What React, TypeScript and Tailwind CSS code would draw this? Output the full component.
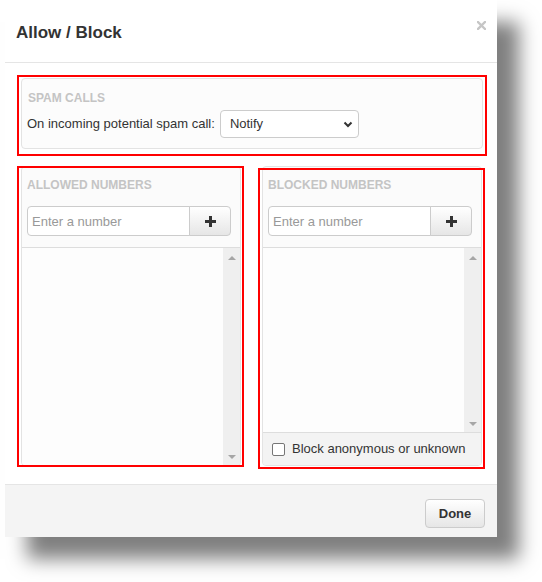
import { ReactNode } from "react";

function ScrollArrow({ dir }: { dir: "up" | "down" }) {
  return (
    <svg width="8" height="4" viewBox="0 0 8 4">
      <polygon points={dir === "up" ? "0,4 8,4 4,0" : "0,0 8,0 4,4"} fill="#a6a6a6" />
    </svg>
  );
}

function PlusIcon() {
  return (
    <svg width="11" height="11" viewBox="0 0 11 11">
      <rect x="4" y="0" width="3" height="11" fill="#333" />
      <rect x="0" y="4" width="11" height="3" fill="#333" />
    </svg>
  );
}

function NumberList({ title, children }: { title: string; children?: ReactNode }) {
  return (
    <div className="h-[300px] flex flex-col rounded-[4px] border border-[#e3e3e3] bg-[#fbfbfb] overflow-hidden">
      <div className="pl-[5px] pt-[11px] text-[12px] leading-[14px] font-bold text-[#c4c4c4]">{title}</div>
      <div className="mt-[14px] ml-[5px] flex h-[30px] w-[204px]">
        <input
          placeholder="Enter a number"
          className="w-[163px] h-full rounded-l-[4px] border border-[#cccccc] bg-white px-[4px] text-[13px] text-[#333] placeholder:text-[#999] outline-none"
        />
        <button className="-ml-px w-[42px] h-full rounded-r-[4px] border border-[#cccccc] bg-gradient-to-b from-white to-[#e6e6e6] flex items-center justify-center">
          <PlusIcon />
        </button>
      </div>
      <div className="mt-[11px] flex flex-1 border-t border-[#dddddd]">
        <div className="flex-1 bg-[#fdfdfd]" />
        <div className="w-[17px] bg-[#efefef] flex flex-col items-center justify-between pt-[8px] pb-[6px]">
          <ScrollArrow dir="up" />
          <ScrollArrow dir="down" />
        </div>
      </div>
      {children}
    </div>
  );
}

export default function App() {
  return (
    <div className="w-[542px] h-[582px] bg-white overflow-hidden font-['Liberation_Sans',Arial,sans-serif] text-[#333]">
      <div className="relative ml-[5px] w-[492px] h-[537px] bg-white flex flex-col shadow-[22px_22px_18px_rgba(0,0,0,0.5)]">
        {/* header */}
        <div className="h-[63px] border-b border-[#e5e5e5] flex justify-between">
          <h4 className="pl-[11px] pt-[23px] text-[17px] leading-[20px] font-bold text-[#333]">Allow / Block</h4>
          <button className="mt-[21px] mr-[11px] h-[9px] w-[9px]">
            <svg width="9" height="9" viewBox="0 0 9 9">
              <path d="M1 1 L8 8 M8 1 L1 8" stroke="#c6c6c6" strokeWidth="2.4" strokeLinecap="square" />
            </svg>
          </button>
        </div>

        {/* body */}
        <div className="flex-1 pl-[16px] pt-[15px]">
          <div className="w-[462px] h-[71px] rounded-[4px] border border-[#e3e3e3] bg-[#fcfcfc] pl-[5px]">
            <div className="ml-[1px] pt-[12px] text-[12px] leading-[14px] font-bold text-[#c4c4c4]">SPAM CALLS</div>
            <div className="mt-[5px] flex items-center h-[28px]">
              <span className="text-[13px] text-[#333]">On incoming potential spam call:</span>
              <div className="relative ml-[5px]">
                <select className="appearance-none w-[139px] h-[28px] rounded-[4px] border border-[#cccccc] bg-white pl-[9px] text-[13px] text-[#333] outline-none">
                  <option>Notify</option>
                  <option>Block</option>
                  <option>Allow</option>
                </select>
                <svg className="pointer-events-none absolute right-[6px] top-[11px]" width="10" height="7" viewBox="0 0 10 7">
                  <polyline points="1.5,1.5 5,5 8.5,1.5" fill="none" stroke="#333" strokeWidth="2" />
                </svg>
              </div>
            </div>
          </div>

          <div className="mt-[17px] grid grid-cols-[220px_220px] gap-x-[21px]">
            <NumberList title="ALLOWED NUMBERS" />
            <NumberList title="BLOCKED NUMBERS">
              <label className="h-[33px] flex items-center border-t border-[#dddddd] bg-[#f3f3f3]">
                <span className="ml-[9px] w-[13px] h-[13px] rounded-[2px] border border-[#767676] bg-white" />
                <span className="ml-[7px] text-[13px] text-[#333]">Block anonymous or unknown</span>
              </label>
            </NumberList>
          </div>
        </div>

        {/* footer */}
        <div className="h-[53px] border-t border-[#e5e5e5] bg-[#f4f4f4] flex justify-end pt-[14px] pr-[12px]">
          <button className="w-[60px] h-[29px] rounded-[4px] border border-[#cccccc] bg-gradient-to-b from-white to-[#e6e6e6] text-[13px] font-bold text-[#333]">
            Done
          </button>
        </div>

        {/* red annotation boxes */}
        <div className="pointer-events-none absolute left-[12px] top-[75px] w-[470px] h-[81px] border-2 border-[#ff0000]" />
        <div className="pointer-events-none absolute left-[12px] top-[166px] w-[227px] h-[301px] border-2 border-[#ff0000]" />
        <div className="pointer-events-none absolute left-[253px] top-[168px] w-[227px] h-[301px] border-2 border-[#ff0000]" />
      </div>
    </div>
  );
}
